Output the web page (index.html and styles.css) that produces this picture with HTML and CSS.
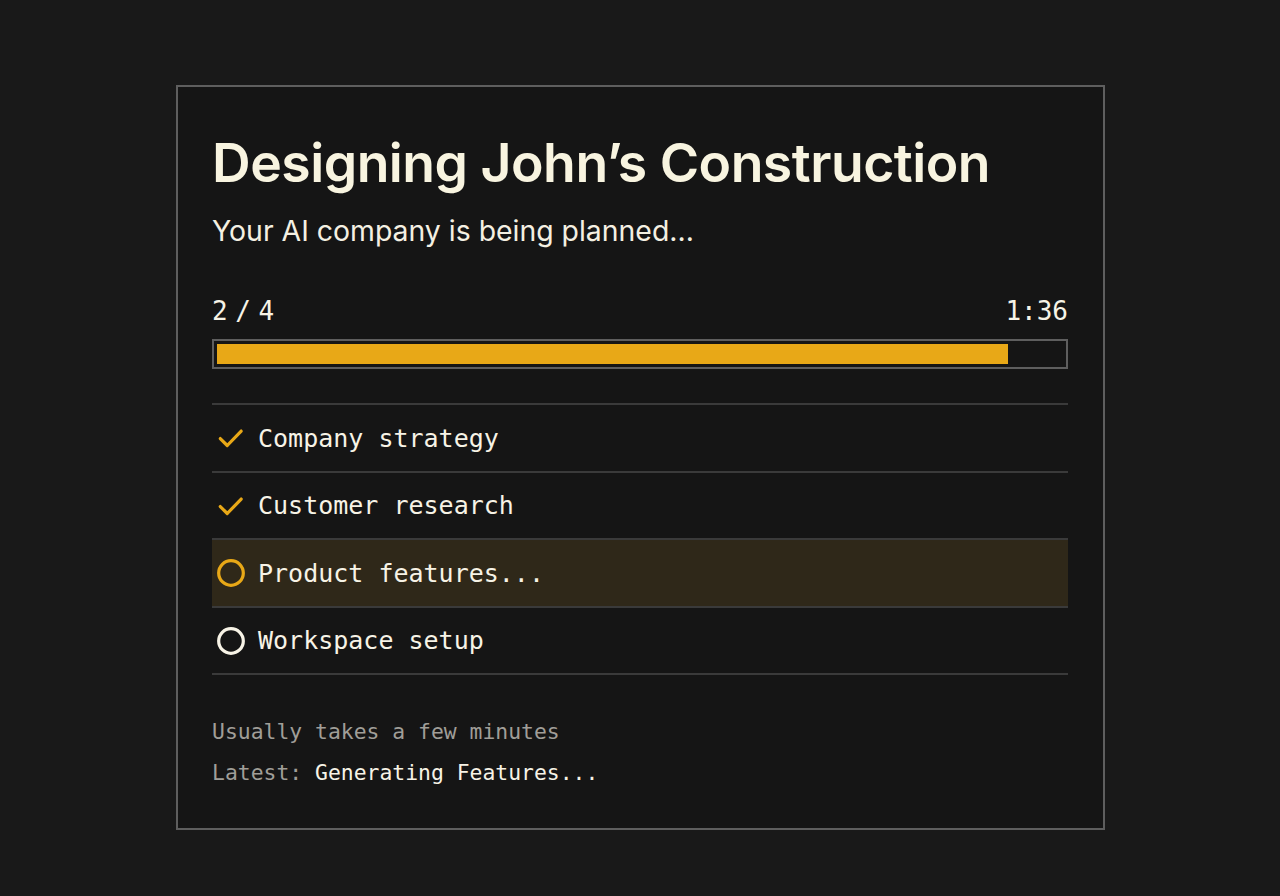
FILE: index.html
```html
<!DOCTYPE html>
<html>
<head>
<meta charset="utf-8">
<link rel="stylesheet" href="styles.css">
</head>
<body>
<main class="page">
  <section class="card">
    <h1 class="title">Designing John’s Construction</h1>
    <p class="subtitle">Your AI company is being planned...</p>
    <div class="progress-head">
      <span class="count">2 / 4</span>
      <span>1:36</span>
    </div>
    <div class="bar"><div class="fill" style="width: 93.5%"></div></div>
    <ul class="steps">
      <li class="step done">
        <svg class="icon" viewBox="0 0 28 28"><path d="M4 14.5 L10.5 21 L23.5 7.5" fill="none" stroke="#e8a817" stroke-width="3" stroke-linecap="round" stroke-linejoin="round"/></svg>
        <span>Company strategy</span>
      </li>
      <li class="step done">
        <svg class="icon" viewBox="0 0 28 28"><path d="M4 14.5 L10.5 21 L23.5 7.5" fill="none" stroke="#e8a817" stroke-width="3" stroke-linecap="round" stroke-linejoin="round"/></svg>
        <span>Customer research</span>
      </li>
      <li class="step active">
        <svg class="icon" viewBox="0 0 28 28"><circle cx="14" cy="14" r="11.5" fill="none" stroke="#e8a817" stroke-width="3"/></svg>
        <span>Product features...</span>
      </li>
      <li class="step">
        <svg class="icon" viewBox="0 0 28 28"><circle cx="14" cy="14" r="11.5" fill="none" stroke="#f7f3e6" stroke-width="3"/></svg>
        <span>Workspace setup</span>
      </li>
    </ul>
    <div class="foot">
      <p class="muted">Usually takes a few minutes</p>
      <p><span class="muted">Latest:</span> Generating Features...</p>
    </div>
  </section>
</main>
</body>
</html>
```

FILE: styles.css
```css
* { box-sizing: border-box; }
html, body { margin: 0; padding: 0; }
body {
  background: #191919;
  color: #f7f3e3;
  width: 1280px;
  height: 896px;
  overflow: hidden;
}
.page {
  padding: 85px 0 0 176px;
}
.card {
  width: 929px;
  height: 745px;
  border: 2px solid #5e5e5e;
  background: #151515;
  padding: 36px 35px 0 34px;
}
.title {
  margin: 0;
  font-family: Inter, "Noto Sans", sans-serif;
  font-weight: 600;
  font-size: 53.5px;
  line-height: 80px;
  letter-spacing: -0.5px;
  color: #f8f4e0;
}
.subtitle {
  margin: 8px 0 0;
  font-family: Inter, "Noto Sans", sans-serif;
  font-size: 28.4px;
  line-height: 40px;
  color: #f4f0e2;
}
.progress-head {
  margin-top: 44px;
  display: flex;
  justify-content: space-between;
  font-family: "DejaVu Sans Mono", monospace;
  font-size: 26px;
  line-height: 32px;
  color: #f7f3e6;
}
.count {
  word-spacing: -8px;
}
.bar {
  margin-top: 12px;
  height: 30px;
  border: 2px solid #5e5e5e;
  padding: 3px;
}
.fill {
  height: 100%;
  background: #e8a817;
}
.steps {
  list-style: none;
  margin: 34px 0 0;
  padding: 0;
  border-top: 2px solid #3a3a3a;
}
.step {
  display: flex;
  align-items: center;
  gap: 12px;
  height: 67.5px;
  padding-left: 4px;
  padding-top: 1px;
  border-bottom: 2px solid #3a3a3a;
  font-family: "DejaVu Sans Mono", monospace;
  font-size: 25px;
  color: #f7f3e6;
}
.step.active {
  background: #2f2819;
}
.icon {
  width: 30px;
  height: 30px;
  flex: none;
}
.foot {
  margin-top: 36px;
  font-family: "DejaVu Sans Mono", monospace;
  font-size: 21.4px;
  color: #f7f3e6;
}
.foot p {
  margin: 0;
  line-height: 41px;
}
.muted {
  color: #a09e98;
}
```
